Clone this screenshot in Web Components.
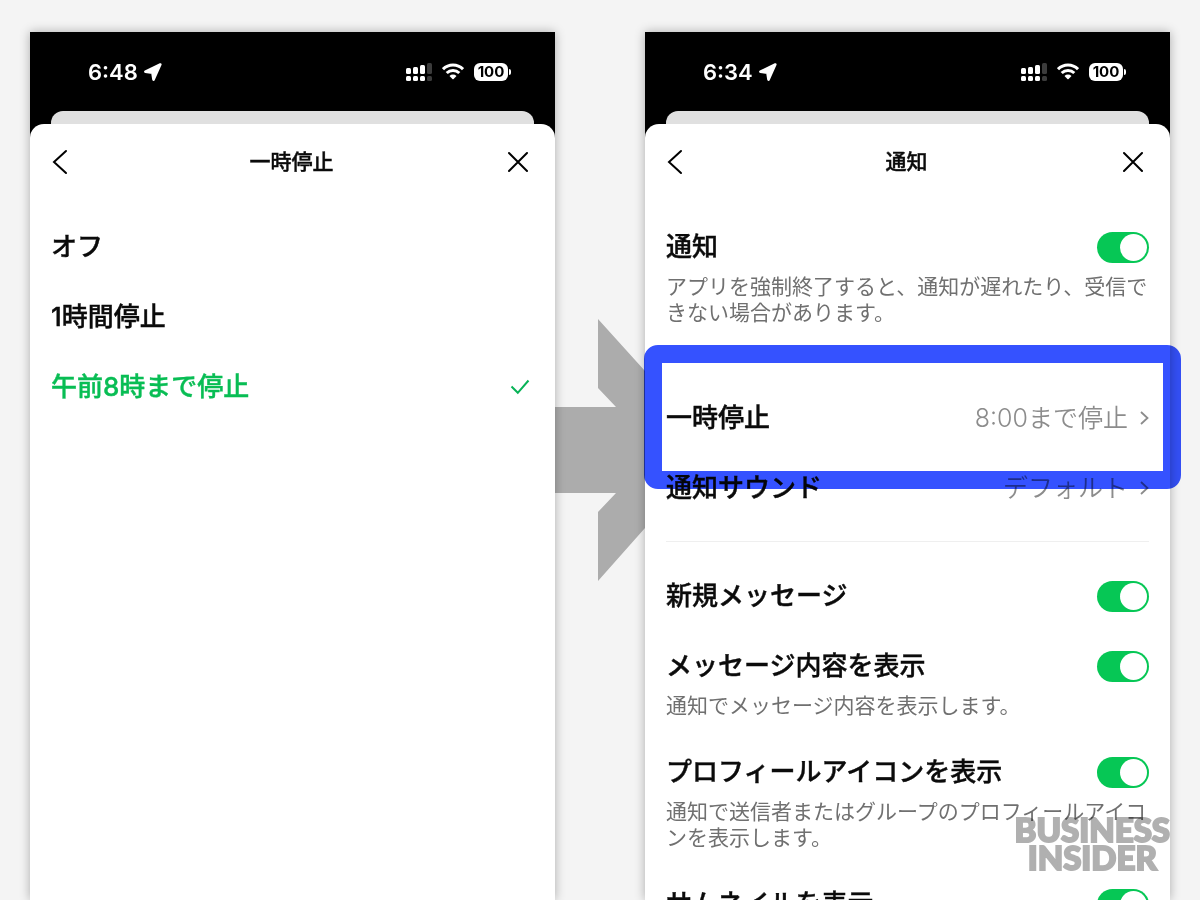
<!DOCTYPE html>
<html lang="ja">
<head>
<meta charset="utf-8">
<meta name="viewport" content="width=device-width, initial-scale=1">
<title>通知の一時停止</title>
<style>
  body {
    --color-green: #06c755;
    --color-text: #0b0b0b;
    --color-muted: #707070;
    --gutter: 21px;
    margin: 0;
    background: #f4f4f4;
    color: var(--color-text);
    font-family: Inter, "Noto Sans CJK JP", sans-serif;
  }
</style>
</head>
<body>
<compare-board>
  <phone-screen time="6:48" heading="一時停止">
    <pause-option>オフ</pause-option>
    <pause-option>1時間停止</pause-option>
    <pause-option selected>午前8時まで停止</pause-option>
  </phone-screen>
  <step-arrow></step-arrow>
  <phone-screen time="6:34" heading="通知">
    <switch-row>通知<span slot="note">アプリを強制終了すると、通知が遅れたり、受信できない場合があります。</span></switch-row>
    <row-group>
      <link-row marked>一時停止<span slot="value">8:00まで停止</span></link-row>
      <link-row>通知サウンド<span slot="value">デフォルト</span></link-row>
    </row-group>
    <switch-row>新規メッセージ</switch-row>
    <switch-row>メッセージ内容を表示<span slot="note">通知でメッセージ内容を表示します。</span></switch-row>
    <switch-row>プロフィールアイコンを表示<span slot="note">通知で送信者またはグループのプロフィールアイコンを表示します。</span></switch-row>
    <switch-row>サムネイルを表示</switch-row>
  </phone-screen>
</compare-board>
<brand-mark>BUSINESS<br>INSIDER</brand-mark>

<script>
customElements.define(
  "compare-board",
  class CompareBoard extends HTMLElement {
    constructor() {
      super();
      this.attachShadow({ mode: "open" });
      this.shadowRoot.innerHTML = `
      <style>
        :host {
          display: grid;
          grid-template-columns: 1fr 90px 1fr;
          grid-template-rows: 100%;
          box-sizing: border-box;
          height: 100vh;
          padding: 32px 30px 0;
          overflow: hidden;
        }
      </style>
      <slot></slot>
      `;
    }
  }
);

customElements.define(
  "step-arrow",
  class StepArrow extends HTMLElement {
    constructor() {
      super();
      this.attachShadow({ mode: "open" });
      this.shadowRoot.innerHTML = `
      <style>
        :host {
          display: block;
          padding-top: 287px;
          mix-blend-mode: multiply;
        }
        svg {
          display: block;
          width: 100%;
        }
      </style>
      <svg viewBox="0 0 90 262" aria-hidden="true">
        <path fill="#b4b4b4" d="M0 88H61L43 69V0L90 52V209L43 262V193L61 174H0Z"/>
      </svg>
      `;
    }
  }
);

customElements.define(
  "status-bar",
  class StatusBar extends HTMLElement {
    constructor() {
      super();
      this.attachShadow({ mode: "open" });
      this.shadowRoot.innerHTML = `
      <style>
        :host {
          display: flex;
          flex: none;
          align-items: center;
          justify-content: space-between;
          height: 79px;
          padding: 0 44px 0 58px;
          color: #fff;
        }
        div {
          display: flex;
          align-items: center;
          gap: 6px;
        }
        .icons {
          gap: 10px;
        }
        time {
          font-size: 22px;
          font-weight: 600;
          line-height: 28px;
        }
        .battery {
          display: flex;
          align-items: center;
          gap: 1px;
        }
        .level {
          width: 34px;
          border-radius: 6px;
          background: #fff;
          color: #000;
          font-size: 15px;
          font-weight: 700;
          line-height: 18px;
          text-align: center;
        }
        .nub {
          width: 2px;
          height: 6px;
          border-radius: 0 2px 2px 0;
          background: #fff;
        }
      </style>
      <div>
        <time>${this.getAttribute("time")}</time>
        <svg width="18" height="18" viewBox="0 0 18 18" aria-hidden="true">
          <path fill="#fff" stroke="#fff" stroke-width="2.600" stroke-linejoin="round" d="M16.300 1.500 1.400 8.700 8.400 9.600 9.500 16.600Z"/>
        </svg>
      </div>
      <div class="icons">
        <svg width="26" height="18" viewBox="0 0 26 18" aria-hidden="true">
          <g fill="#fff">
            <rect x="0" y="5" width="5" height="6" rx="1.500"/>
            <rect x="7" y="4" width="5" height="7" rx="1.500"/>
            <rect x="14" y="2" width="5" height="9" rx="1.500"/>
            <rect x="0" y="13" width="5" height="5" rx="1.500"/>
            <rect x="7" y="13" width="5" height="5" rx="1.500"/>
            <rect x="14" y="13" width="5" height="5" rx="1.500"/>
          </g>
          <g fill="#3c3c3c">
            <rect x="21" y="0" width="5" height="11" rx="1.500"/>
            <rect x="21" y="13" width="5" height="5" rx="1.500"/>
          </g>
        </svg>
        <svg width="22" height="17" viewBox="0 0 22 17" aria-hidden="true">
          <g fill="none" stroke="#fff" stroke-width="3">
            <path d="M1 6.200A14.200 14.200 0 0 1 21 6.200"/>
            <path d="M4.700 10A9 9 0 0 1 17.300 10"/>
          </g>
          <path fill="#fff" d="M7.500 12.900A5 5 0 0 1 14.500 12.900L11.600 15.900Q11 16.500 10.400 15.900Z"/>
        </svg>
        <span class="battery"><span class="level">100</span><span class="nub"></span></span>
      </div>
      `;
    }
  }
);

customElements.define(
  "phone-screen",
  class PhoneScreen extends HTMLElement {
    constructor() {
      super();
      this.attachShadow({ mode: "open" });
      const heading = this.getAttribute("heading");
      this.shadowRoot.innerHTML = `
      <style>
        :host {
          display: flex;
          flex-direction: column;
          min-width: 0;
          background: linear-gradient(#000 120px, #fff 120px);
          box-shadow: 0 0 10px rgba(0, 0, 0, 0.3);
        }
        .behind {
          flex: none;
          height: 13px;
          margin: 0 var(--gutter);
          border-radius: 12px 12px 0 0;
          background: #e0e0e0;
        }
        main {
          flex: 1 0 auto;
          padding: 0 var(--gutter);
          border-radius: 14px 14px 0 0;
          background: #fff;
        }
        header {
          display: flex;
          align-items: center;
          justify-content: space-between;
          height: 76px;
          margin-bottom: 12px;
        }
        h1 {
          margin: 0;
          font-size: 21px;
          font-weight: 500;
          line-height: 28px;
          -webkit-text-stroke: 0.4px;
        }
        button {
          display: flex;
          padding: 0;
          border: 0;
          background: none;
        }
        svg {
          fill: none;
          stroke: #000;
          stroke-width: 2;
          stroke-linecap: round;
        }
      </style>
      <status-bar time="${this.getAttribute("time")}"></status-bar>
      <div class="behind"></div>
      <main>
        <header>
          <button aria-label="戻る">
            <svg width="24" height="26" viewBox="0 0 24 26"><path d="M15 2 3 13 15 24"/></svg>
          </button>
          <h1>${heading}</h1>
          <button aria-label="閉じる">
            <svg width="26" height="26" viewBox="0 0 26 26"><path d="M1 4 19 22M19 4 1 22"/></svg>
          </button>
        </header>
        <slot></slot>
      </main>
      `;
    }
  }
);

customElements.define(
  "pause-option",
  class PauseOption extends HTMLElement {
    constructor() {
      super();
      this.attachShadow({ mode: "open" });
      const selected = this.hasAttribute("selected");
      this.shadowRoot.innerHTML = `
      <style>
        :host {
          display: block;
        }
        label {
          display: flex;
          align-items: center;
          justify-content: space-between;
          height: 70px;
          font-size: 26px;
          font-weight: 500;
          line-height: 38px;
          -webkit-text-stroke: 0.4px;
        }
        label:has(:checked) {
          color: #08bd54;
        }
        input {
          appearance: none;
          width: 0;
          height: 0;
          margin: 0;
        }
        span {
          flex: 1;
        }
        svg {
          display: none;
          margin-right: 4px;
        }
        :checked ~ svg {
          display: block;
        }
      </style>
      <label>
        <input type="radio" name="pause" ${selected ? "checked" : ""}>
        <span><slot></slot></span>
        <svg width="20" height="16" viewBox="0 0 20 16" aria-hidden="true">
          <path d="M1.500 7.500 7.800 13.800 18.500 1.500" fill="none" stroke="#08b357" stroke-width="2"/>
        </svg>
      </label>
      `;
    }
  }
);

customElements.define(
  "switch-row",
  class SwitchRow extends HTMLElement {
    constructor() {
      super();
      this.attachShadow({ mode: "open" });
      const note = this.querySelector("[slot=note]");
      this.shadowRoot.innerHTML = `
      <style>
        :host {
          display: block;
          padding: 16px 0;
        }
        label {
          display: flex;
          align-items: center;
          justify-content: space-between;
          font-size: 26px;
          font-weight: 500;
          line-height: 38px;
          -webkit-text-stroke: 0.4px;
        }
        input {
          appearance: none;
          display: flex;
          flex: none;
          box-sizing: border-box;
          width: 52px;
          height: 31px;
          margin: 0;
          padding: 2px;
          border-radius: 16px;
          background: #d8d8d8;
        }
        input::before {
          content: "";
          width: 27px;
          height: 27px;
          border-radius: 50%;
          background: #fff;
        }
        input:checked {
          justify-content: flex-end;
          background: var(--color-green);
        }
        p {
          margin: 8px 0 2px;
          color: var(--color-muted);
          font-size: 21px;
          line-height: 26px;
        }
      </style>
      <label><span><slot></slot></span><input type="checkbox" role="switch" checked></label>
      ${note ? `<p><slot name="note"></slot></p>` : ""}
      `;
    }
  }
);

customElements.define(
  "row-group",
  class RowGroup extends HTMLElement {
    constructor() {
      super();
      this.attachShadow({ mode: "open" });
      this.shadowRoot.innerHTML = `
      <style>
        :host {
          display: block;
          margin: 39px 0 19px;
          padding-bottom: 18px;
          border-bottom: 1px solid #efefef;
        }
      </style>
      <slot></slot>
      `;
    }
  }
);

customElements.define(
  "link-row",
  class LinkRow extends HTMLElement {
    constructor() {
      super();
      this.attachShadow({ mode: "open" });
      this.shadowRoot.innerHTML = `
      <style>
        :host {
          display: block;
        }
        :host([marked]) {
          position: relative;
        }
        /* marker frame drawn over the row and its neighbours */
        :host([marked])::after {
          content: "";
          position: absolute;
          inset: -38px -32px -36px -22px;
          border: 18px solid #3552ff;
          border-radius: 14px;
          mix-blend-mode: multiply;
          pointer-events: none;
        }
        button {
          display: flex;
          align-items: center;
          justify-content: space-between;
          width: 100%;
          height: 70px;
          padding: 0;
          border: 0;
          background: none;
          color: inherit;
          font: inherit;
          font-size: 26px;
          font-weight: 500;
          line-height: 38px;
          -webkit-text-stroke: 0.4px;
        }
        .value {
          display: flex;
          align-items: center;
          gap: 12px;
          color: #8c8c8c;
          font-size: 25px;
          font-weight: 350;
          -webkit-text-stroke: 0;
        }
      </style>
      <button>
        <span><slot></slot></span>
        <span class="value">
          <slot name="value"></slot>
          <svg width="9" height="14" viewBox="0 0 9 14" aria-hidden="true">
            <path d="M1 1 7.500 7 1 13" fill="none" stroke="#8c8c8c" stroke-width="1.800"/>
          </svg>
        </span>
      </button>
      `;
    }
  }
);

customElements.define(
  "brand-mark",
  class BrandMark extends HTMLElement {
    constructor() {
      super();
      this.attachShadow({ mode: "open" });
      this.shadowRoot.innerHTML = `
      <style>
        :host {
          display: block;
          position: fixed;
          right: 30px;
          bottom: 29px;
          color: #b0b0b0;
          font-family: Lato, sans-serif;
          font-size: 33px;
          font-weight: 900;
          line-height: 28px;
          text-align: center;
          mix-blend-mode: multiply;
          -webkit-text-stroke: 2px;
        }
      </style>
      <slot></slot>
      `;
    }
  }
);
</script>
</body>
</html>
